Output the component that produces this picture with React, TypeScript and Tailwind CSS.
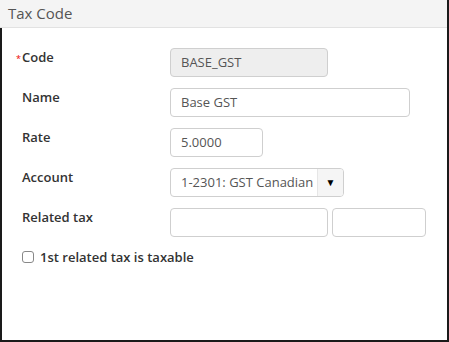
import React from "react";

const font = { fontFamily: '"Open Sans", "Noto Sans", sans-serif' };

function Label({ children, required }: { children: React.ReactNode; required?: boolean }) {
  return (
    <div className="relative w-[148px] shrink-0 text-[13px] font-semibold leading-[18px] text-[#333]">
      {required && (
        <span className="absolute left-[-6px] top-[6px] text-[9px] leading-[9px] font-normal text-[#e00]">*</span>
      )}
      {children}
    </div>
  );
}

export default function App() {
  return (
    <div className="w-[449px] h-[342px] bg-white flex flex-col border-r-2 border-b-2 border-[#1a1a1a]" style={font}>
      <div className="h-[28px] shrink-0 bg-[#f4f4f4] border-b border-[#e2e2e2] pl-[8px] text-[15px] leading-[27px] text-[#555]">
        Tax Code
      </div>
      <div className="flex-1 border-l-2 border-[#1a1a1a] pl-[20px] pt-[20px] flex flex-col gap-[11px]">
        <div className="flex items-start">
          <Label required>Code</Label>
          <div className="w-[158px] h-[29px] rounded-[4px] border border-[#cfcfcf] bg-[#eeeeee] px-[10px] text-[13px] leading-[27px] text-[#555]">
            BASE_GST
          </div>
        </div>
        <div className="flex items-start">
          <Label>Name</Label>
          <div className="w-[240px] h-[29px] rounded-[4px] border border-[#cfcfcf] bg-white px-[10px] text-[13px] leading-[27px] text-[#555]">
            Base GST
          </div>
        </div>
        <div className="flex items-start">
          <Label>Rate</Label>
          <div className="w-[93px] h-[29px] rounded-[4px] border border-[#cfcfcf] bg-white px-[10px] text-[13px] leading-[27px] text-[#555]">
            5.0000
          </div>
        </div>
        <div className="flex items-start">
          <Label>Account</Label>
          <div className="w-[174px] h-[29px] rounded-[4px] border border-[#cfcfcf] bg-white flex overflow-hidden">
            <div className="w-[146px] overflow-hidden whitespace-nowrap pl-[10px] text-[13px] leading-[27px] text-[#555]">
              1-2301: GST Canadian
            </div>
            <div className="flex-1 bg-[#f5f5f5] border-l border-[#e6e6e6] flex items-center justify-center text-[10px] text-black">
              ▼
            </div>
          </div>
        </div>
        <div className="flex items-start">
          <Label>Related tax</Label>
          <div className="flex gap-[4px]">
            <div className="w-[158px] h-[29px] rounded-[4px] border border-[#cfcfcf] bg-white" />
            <div className="w-[94px] h-[29px] rounded-[4px] border border-[#cfcfcf] bg-white" />
          </div>
        </div>
        <div className="flex items-center gap-[6px] pl-[0px]">
          <div className="w-[12px] h-[12px] rounded-[3px] border border-[#888] bg-white" />
          <span className="text-[13px] font-semibold text-[#333] leading-[18px]">1st related tax is taxable</span>
        </div>
      </div>
    </div>
  );
}
